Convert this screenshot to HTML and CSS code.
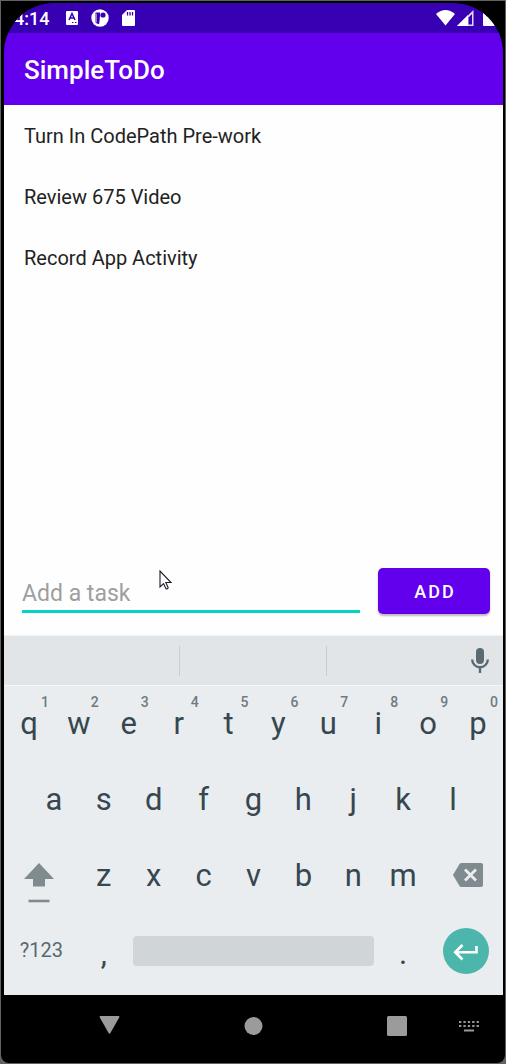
FILE: index.html
```html
<!DOCTYPE html>
<html lang="en">
<head>
<meta charset="utf-8">
<meta name="viewport" content="width=device-width, initial-scale=1">
<title>SimpleToDo</title>
<link rel="stylesheet" href="styles.css">
</head>
<body>
<div class="phone">
<div class="bezel">
<div class="screen">
  <div class="status-bar">
    <span class="clock">4:14</span>
    <div class="status-left">
      <svg width="12" height="14" viewBox="0 0 12 14"><rect width="12" height="14" rx="1" fill="#fff"/><path d="M3 9 6 2.500 9 9M4.200 7h3.600" fill="none" stroke="#3700b3" stroke-width="1.500"/><path d="M6 11.500h1.500M9 11.500h1.500" stroke="#3700b3"/></svg>
      <svg width="18" height="18" viewBox="0 0 18 18"><circle cx="9" cy="9" r="8.700" fill="#fff"/><path d="M4.500 3.500h4.500v3.500l-.8 8q-2 0-3.700-1.500z" fill="#3700b3"/><path d="M5.300 4.500v9" stroke="#fff" stroke-width=".6" fill="none"/><circle cx="12" cy="6" r="2.600" fill="#3700b3"/></svg>
      <svg width="13" height="16" viewBox="0 0 13 16"><path d="M5 0h7q1 0 1 1v14q0 1-1 1H1q-1 0-1-1V5z" fill="#fff"/><path d="M5.500 2v3.500M8 2v3.500M10.500 2v3.500" stroke="#3700b3" stroke-width="1.300"/></svg>
    </div>
    <div class="status-right">
      <svg width="19" height="16" viewBox="0 0 19 16"><path d="M0 4Q9.500-4 19 4L9.500 15.500z" fill="#fff"/></svg>
      <svg width="17" height="16" viewBox="0 0 17 16"><path d="M0 16 16.500 0v16z" fill="#e3d9f6"/><path d="M0 16 11 5v11z" fill="#fff"/><path d="M11.500 7.500 15 4v10.500h-3.500z" fill="#3700b3"/></svg>
      <svg class="battery" width="12" height="16" viewBox="0 0 12 16"><path d="M3 1.500V0h6v1.500h2q1 0 1 1V15q0 1-1 1H1q-1 0-1-1V2.500q0-1 1-1z" fill="#fff"/></svg>
    </div>
  </div>
  <header class="app-bar"><h1>SimpleToDo</h1></header>
  <main class="content">
    <ul class="tasks">
      <li>Turn In CodePath Pre-work</li>
      <li>Review 675 Video</li>
      <li>Record App Activity</li>
    </ul>
    <form class="composer" onsubmit="return false">
      <input class="task-input" type="text" placeholder="Add a task" aria-label="Add a task">
      <button class="add" type="submit">ADD</button>
      <svg class="pointer" width="14" height="21" viewBox="0 0 14 21"><path d="M1 1v16l3.500-3.300 2.700 5.300q1.500 0 2-1.200L6.800 12.500H12z" fill="#fff" stroke="#1b1b2b" stroke-width="1.100"/></svg>
    </form>
  </main>
  <section class="keyboard" aria-label="Keyboard">
    <div class="suggestions">
      <span></span><span></span>
      <button class="mic" aria-label="Voice input"><svg width="18" height="25" viewBox="0 0 18 25"><rect x="5" width="8" height="16" rx="4" fill="#5a6a72"/><path d="M1.200 11.500a7.800 7.800 0 0 0 15.600 0M9 19v6" fill="none" stroke="#5a6a72" stroke-width="2.400"/></svg></button>
    </div>
    <div class="keys">
      <div class="row">
        <button>q<sup>1</sup></button><button>w<sup>2</sup></button><button>e<sup>3</sup></button><button>r<sup>4</sup></button><button>t<sup>5</sup></button><button>y<sup>6</sup></button><button>u<sup>7</sup></button><button>i<sup>8</sup></button><button>o<sup>9</sup></button><button>p<sup>0</sup></button>
      </div>
      <div class="row row-home">
        <button>a</button><button>s</button><button>d</button><button>f</button><button>g</button><button>h</button><button>j</button><button>k</button><button>l</button>
      </div>
      <div class="row row-shift">
        <button class="shift" aria-label="Shift"><svg width="30" height="40" viewBox="0 0 30 40"><path d="M15 0 30 16h-9v7.500H9V16H0z" fill="#808b8f"/><path d="M4.500 38h21" stroke="#808b8f" stroke-width="2.600"/></svg></button>
        <button>z</button><button>x</button><button>c</button><button>v</button><button>b</button><button>n</button><button>m</button>
        <button class="erase" aria-label="Backspace"><svg width="30" height="24" viewBox="0 0 30 24"><path d="M8.500 0H28q2 0 2 2v20q0 2-2 2H8.500q-1.200 0-2-1L0 12 6.500 1q.8-1 2-1z" fill="#808b8f"/><path d="m12 6.500 11 11m0-11-11 11" stroke="#e9edf0" stroke-width="2.800"/></svg></button>
      </div>
      <div class="row row-space">
        <button class="symbols">?123</button>
        <button class="punct">,</button>
        <button class="space" aria-label="Space"></button>
        <button class="punct">.</button>
        <button class="enter" aria-label="Enter"><svg width="46" height="46" viewBox="0 0 46 46"><circle cx="23" cy="23" r="23" fill="#4db6ac"/><path d="M33.500 18v6.300H12.500M19.500 17l-7.300 7.300 7.300 7.200" fill="none" stroke="#fff" stroke-width="2.600"/></svg></button>
      </div>
    </div>
  </section>
  <nav class="nav-bar">
    <button aria-label="Back"><svg width="21" height="22" viewBox="0 0 21 22"><path d="M1.500 1h18q1.300.3.700 1.500l-8.800 15.500q-.9 1.400-1.800 0L.8 2.500Q.2 1.300 1.500 1z" fill="#9b9b9b"/></svg></button>
    <button aria-label="Home"><svg width="19" height="20" viewBox="0 0 19 20"><circle cx="9.500" cy="10" r="9" fill="#9b9b9b"/></svg></button>
    <button aria-label="Recent apps"><svg width="20" height="20" viewBox="0 0 20 20"><rect width="20" height="20" rx="1.500" fill="#9b9b9b"/></svg></button>
    <button aria-label="Switch keyboard"><svg width="20" height="12" viewBox="0 0 20 12"><path d="M0 2h20M0 6h20" stroke="#9b9b9b" stroke-width="2.200" stroke-dasharray="2.300 2.100"/><path d="M5 10.500h10" stroke="#9b9b9b" stroke-width="2"/></svg></button>
  </nav>
</div>
</div>
</div>
</body>
</html>
```
FILE: styles.css
```css
* { box-sizing: border-box; }
body { margin: 0; background: #626262; font-family: Roboto, "Liberation Sans", sans-serif; }
button, input { font: inherit; color: inherit; border: 0; margin: 0; padding: 0; background: none; border-radius: 0; }
svg { display: block; flex: none; }

.phone { min-height: 100vh; padding: 1px; display: flex; }
.bezel {
  flex: 1; min-width: 0; display: flex;
  background: #000; border-radius: 0 0 8px 8px;
  padding: 2px 2px 2px 3px;
}
.screen {
  flex: 1; min-width: 0; display: flex; flex-direction: column;
  overflow: hidden; border-radius: 50px 50px 0 0;
}

.status-bar { height: 30px; padding: 0 8px 0 10px; display: flex; align-items: center; background: #3700b3; color: #fff; }
.clock { width: 52px; font-size: 18px; font-weight: 500; }
.status-left { display: flex; align-items: center; gap: 13px; }
.status-right { display: flex; align-items: center; gap: 2px; margin-left: auto; }
.battery { margin-left: 7px; }

.app-bar { height: 72px; padding: 2px 20px 0; display: flex; align-items: center; background: #6200ee; color: #fff; }
.app-bar h1 { margin: 0; font-size: 26px; font-weight: 500; }

.content { flex: 1; display: flex; flex-direction: column; background: #fefefe; }
.tasks { flex: 1; margin: 0; padding: 0; list-style: none; color: #222; font-size: 20px; }
.tasks li { height: 61px; padding: 0 20px; display: flex; align-items: center; }
.composer { position: relative; display: flex; align-items: center; gap: 18px; padding: 0 13px 21px 18px; }
.task-input { flex: 1; min-width: 0; height: 44px; padding-top: 8px; border-bottom: 3px solid #03d5c5; outline: 0; font-size: 23px; color: #222; }
.task-input::placeholder { color: #9e9e9e; opacity: 1; }
.add { width: 112px; height: 46px; padding-left: 2px; border-radius: 5px; background: #6200ee; color: #fff; font-size: 18px; font-weight: 500; letter-spacing: 2px; box-shadow: 0 2px 2px #0004; }
.pointer { position: absolute; left: 155px; top: 2px; }

.keyboard { background: #e9edf0; color: #37474f; }
.suggestions { height: 51px; display: grid; grid-template-columns: 176fr 147fr 176fr; align-items: center; background: #e1e5e8; border-top: 1px solid #eff1f2; border-bottom: 1px solid #f5f7f8; }
.suggestions span { height: 30px; border-right: 1px solid #c8cdd0; }
.mic { justify-self: end; margin-right: 14px; }
.keys { padding-bottom: 5px; }
.row { height: 76px; display: grid; grid-template-columns: repeat(10, 1fr); font-size: 31px; }
.row button { position: relative; display: flex; align-items: center; justify-content: center; padding-bottom: 2px; }
.row sup { position: absolute; top: 8px; right: 5px; font-size: 14px; line-height: 16px; font-weight: 500; color: #6f7b80; }
.row-home { padding: 0 5%; grid-template-columns: repeat(9, 1fr); }
.row-shift { grid-template-columns: 3fr repeat(7, 2fr) 3fr; }
.row .shift { padding: 14px 5px 0 0; }
.row .erase { padding-left: 4px; }
.row-space { grid-template-columns: 3fr 2fr 10fr 2fr 3fr; padding-bottom: 2px; align-items: center; }
.row .symbols { font-size: 20px; color: #59686f; }
.row .enter { padding: 0; }
.row .punct { height: 46px; padding: 4px 0 0; }
.row .space { height: 30px; margin: 0 4px; border-radius: 4px; background: #d0d5d8; }

.nav-bar { height: 66px; padding-left: 95px; display: grid; grid-template-columns: 145fr 144fr 72fr 44fr; align-items: center; justify-items: start; background: #000; }
.nav-bar button { padding-bottom: 5px; }
```
